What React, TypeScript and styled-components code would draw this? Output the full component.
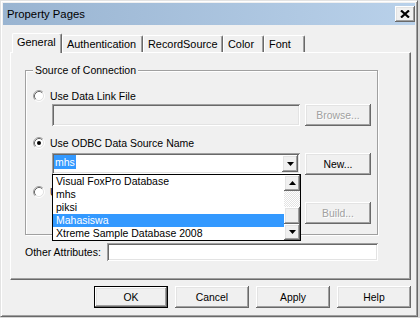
import React from 'react';
import styled, { createGlobalStyle, css } from 'styled-components';

//region styled

const GlobalStyle = createGlobalStyle`
  html, body {
    margin: 0;
    padding: 0;
    background: #d8d8d8;
  }
  body {
    font-family: "Liberation Sans", Arial, sans-serif;
    font-size: 10.5px;
    color: #000;
  }
  * {
    box-sizing: border-box;
  }
`;

const raised = css`
  background: #f0f0f0;
  box-shadow: inset -1px -1px 0 #696969, inset 1px 1px 0 #fff, inset -2px -2px 0 #a0a0a0, inset 2px 2px 0 #e3e3e3;
`;

const sunken = css`
  box-shadow: inset 1px 1px 0 #a0a0a0, inset -1px -1px 0 #fff, inset 2px 2px 0 #696969, inset -2px -2px 0 #e3e3e3;
`;

const Window = styled.div`
  width: 418px;
  height: 317px;
  padding: 2px;
  background: #f0f0f0;
  border: 1px solid;
  border-color: #e3e3e3 #696969 #696969 #e3e3e3;
  box-shadow: inset 1px 1px 0 #fff, inset -1px -1px 0 #a0a0a0;
  display: flex;
  flex-direction: column;
`;

const TitleBar = styled.div`
  height: 22px;
  display: flex;
  align-items: center;
  justify-content: space-between;
  padding-left: 4px;
  background: linear-gradient(to right, #99b4d1, #b9d1ea);
  font-size: 11.3px;
`;

const CloseButton = styled.div`
  ${raised};
  width: 20px;
  height: 16px;
  display: flex;
  align-items: center;
  justify-content: center;
`;

const Content = styled.div`
  width: 408px;
  padding: 8px 0 0 7px;
`;

const TabStrip = styled.div`
  height: 19px;
  display: flex;
  align-items: flex-start;
  padding-left: 2px;
`;

const Tab = styled.div<{ $active?: boolean; $width: number }>`
  position: relative;
  width: ${p => p.$width}px;
  height: ${p => (p.$active ? 20 : 17)}px;
  margin-top: ${p => (p.$active ? 0 : 2)}px;
  padding: 2px 0 0 4px;
  font-size: 10.9px;
  line-height: 13px;
  white-space: nowrap;
  background: #f0f0f0;
  border-top: 1px solid #fff;
  border-left: 1px solid #fff;
  border-right: 1px solid #696969;
  border-radius: 2px 2px 0 0;
  box-shadow: inset -1px 0 0 #a0a0a0;
  z-index: ${p => (p.$active ? 1 : 0)};
`;

const Panel = styled.div`
  width: 401px;
  height: 228px;
  padding: 11px 0 0 14px;
  border: 1px solid;
  border-color: #fff #696969 #696969 #fff;
  box-shadow: inset -1px -1px 0 #a0a0a0;
`;

const GroupBox = styled.fieldset`
  width: 353px;
  margin: 0;
  padding: 13px 5px 10px 7px;
  border: 1px solid #a0a0a0;
  box-shadow: 1px 1px 0 #fff, inset 1px 1px 0 #fff;
  min-inline-size: 0;
`;

const Legend = styled.legend`
  padding: 0 2px;
  line-height: 12px;
  background: #f0f0f0;
`;

const RadioRow = styled.div<{ $gap: number }>`
  height: 14px;
  margin-top: ${p => p.$gap}px;
  display: flex;
  align-items: center;
  gap: 5px;
  line-height: 13px;
  white-space: nowrap;
`;

const FieldRow = styled.div<{ $gap: number }>`
  position: relative;
  margin-top: ${p => p.$gap}px;
  padding-left: 19px;
  display: flex;
  align-items: flex-start;
  gap: 5px;
`;

const TextField = styled.div<{ $disabled?: boolean; $width: number; $height: number }>`
  ${sunken};
  width: ${p => p.$width}px;
  height: ${p => p.$height}px;
  background: ${p => (p.$disabled ? '#f0f0f0' : '#fff')};
`;

const PushButton = styled.div<{ $disabled?: boolean; $default?: boolean; $width: number }>`
  ${raised};
  width: ${p => p.$width}px;
  height: 22px;
  display: flex;
  align-items: center;
  justify-content: center;
  font-size: 10.4px;
  color: ${p => (p.$disabled ? '#a0a0a0' : '#000')};
  text-shadow: ${p => (p.$disabled ? '1px 1px 0 #fff' : 'none')};
  ${p =>
    p.$default &&
    css`
      box-shadow: inset 0 0 0 1px #000, inset -2px -2px 0 #696969, inset 2px 2px 0 #fff, inset -3px -3px 0 #a0a0a0,
        inset 3px 3px 0 #e3e3e3;
    `}
`;

const Combo = styled.div`
  ${sunken};
  position: relative;
  width: 248px;
  height: 21px;
  padding: 2px;
  background: #fff;
  display: flex;
  justify-content: space-between;
  align-items: flex-start;
`;

const Selection = styled.span`
  height: 14px;
  padding: 0 1px;
  line-height: 14px;
  background: #3399ff;
  color: #fff;
`;

const ArrowButton = styled.div<{ $height: number }>`
  ${raised};
  width: 16px;
  height: ${p => p.$height}px;
  display: flex;
  align-items: center;
  justify-content: center;
`;

const DropList = styled.div`
  position: absolute;
  top: 21px;
  left: 0;
  width: 249px;
  height: 67px;
  border: 1px solid #000;
  background: #fff;
  display: flex;
  z-index: 2;
`;

const Items = styled.div`
  flex: 1;
`;

const Item = styled.div<{ $selected?: boolean }>`
  height: 13px;
  padding-left: 3px;
  line-height: 13px;
  white-space: nowrap;
  background: ${p => (p.$selected ? '#3399ff' : 'transparent')};
  color: ${p => (p.$selected ? '#fff' : '#000')};
`;

const ScrollBar = styled.div`
  width: 16px;
  display: flex;
  flex-direction: column;
`;

const Track = styled.div`
  height: 16px;
  background: repeating-conic-gradient(#fff 0 25%, #e3e3e3 0 50%) 0 0 / 2px 2px;
`;

const Thumb = styled.div`
  ${raised};
  height: 17px;
`;

const AttrRow = styled.div`
  margin-top: 8px;
  display: flex;
  align-items: center;
`;

const AttrLabel = styled.div`
  width: 82px;
  white-space: nowrap;
`;

const ButtonBar = styled.div`
  margin-top: 6px;
  width: 401px;
  display: flex;
  justify-content: flex-end;
  gap: 7px;
`;

//endregion

const Radio = ({ checked }: { checked?: boolean }) => (
  <svg width="12" height="12" viewBox="0 0 12 12">
    <circle cx="6" cy="6" r="4.5" fill="#fff" />
    <path d="M2.11 9.89 A5.5 5.5 0 0 1 9.89 2.11" fill="none" stroke="#a0a0a0" />
    <path d="M9.89 2.11 A5.5 5.5 0 0 1 2.11 9.89" fill="none" stroke="#fff" />
    <path d="M2.82 9.18 A4.5 4.5 0 0 1 9.18 2.82" fill="none" stroke="#696969" />
    <path d="M9.18 2.82 A4.5 4.5 0 0 1 2.82 9.18" fill="none" stroke="#e3e3e3" />
    {checked && <circle cx="6" cy="6" r="2" fill="#000" />}
  </svg>
);

const Triangle = ({ up }: { up?: boolean }) => (
  <svg width="7" height="4" viewBox="0 0 7 4">
    <polygon points={up ? '0,4 7,4 3.5,0' : '0,0 7,0 3.5,4'} fill="#000" />
  </svg>
);

const tabs = [
  { label: 'General', width: 50 },
  { label: 'Authentication', width: 81 },
  { label: 'RecordSource', width: 80 },
  { label: 'Color', width: 41 },
  { label: 'Font', width: 41 },
];

const sources = ['Visual FoxPro Database', 'mhs', 'piksi', 'Mahasiswa', 'Xtreme Sample Database 2008'];

const App = () => {
  return (
    <>
      <GlobalStyle />
      <Window>
        <TitleBar>
          <span>Property Pages</span>
          <CloseButton>
            <svg width="10" height="8" viewBox="0 0 10 8">
              <path d="M1 0.5 L9 7.5 M9 0.5 L1 7.5" stroke="#000" strokeWidth="2.2" />
            </svg>
          </CloseButton>
        </TitleBar>

        <Content>
          <TabStrip>
            {tabs.map((t, i) => (
              <Tab key={t.label} $active={i === 0} $width={t.width}>
                {t.label}
              </Tab>
            ))}
          </TabStrip>

          <Panel>
            <GroupBox>
              <Legend>Source of Connection</Legend>

              <RadioRow $gap={0}>
                <Radio />
                Use Data Link File
              </RadioRow>
              <FieldRow $gap={1}>
                <TextField $disabled $width={248} $height={22} />
                <PushButton $disabled $width={66}>
                  Browse...
                </PushButton>
              </FieldRow>

              <RadioRow $gap={10}>
                <Radio checked />
                Use ODBC Data Source Name
              </RadioRow>
              <FieldRow $gap={3} style={{ zIndex: 2 }}>
                <Combo>
                  <Selection>mhs</Selection>
                  <ArrowButton $height={17}>
                    <Triangle />
                  </ArrowButton>
                  <DropList>
                    <Items>
                      {sources.map(s => (
                        <Item key={s} $selected={s === 'Mahasiswa'}>
                          {s}
                        </Item>
                      ))}
                    </Items>
                    <ScrollBar>
                      <ArrowButton $height={16}>
                        <Triangle up />
                      </ArrowButton>
                      <Track />
                      <Thumb />
                      <ArrowButton $height={16}>
                        <Triangle />
                      </ArrowButton>
                    </ScrollBar>
                  </DropList>
                </Combo>
                <PushButton $width={66}>New...</PushButton>
              </FieldRow>

              <RadioRow $gap={10}>
                <Radio />
                Use Connection String
              </RadioRow>
              <FieldRow $gap={3}>
                <TextField $disabled $width={248} $height={22} />
                <PushButton $disabled $width={66}>
                  Build...
                </PushButton>
              </FieldRow>
            </GroupBox>

            <AttrRow>
              <AttrLabel>Other Attributes:</AttrLabel>
              <TextField $width={271} $height={18} />
            </AttrRow>
          </Panel>

          <ButtonBar>
            <PushButton $default $width={74}>
              OK
            </PushButton>
            <PushButton $width={74}>Cancel</PushButton>
            <PushButton $width={74}>Apply</PushButton>
            <PushButton $width={74}>Help</PushButton>
          </ButtonBar>
        </Content>
      </Window>
    </>
  );
};

export default App;
